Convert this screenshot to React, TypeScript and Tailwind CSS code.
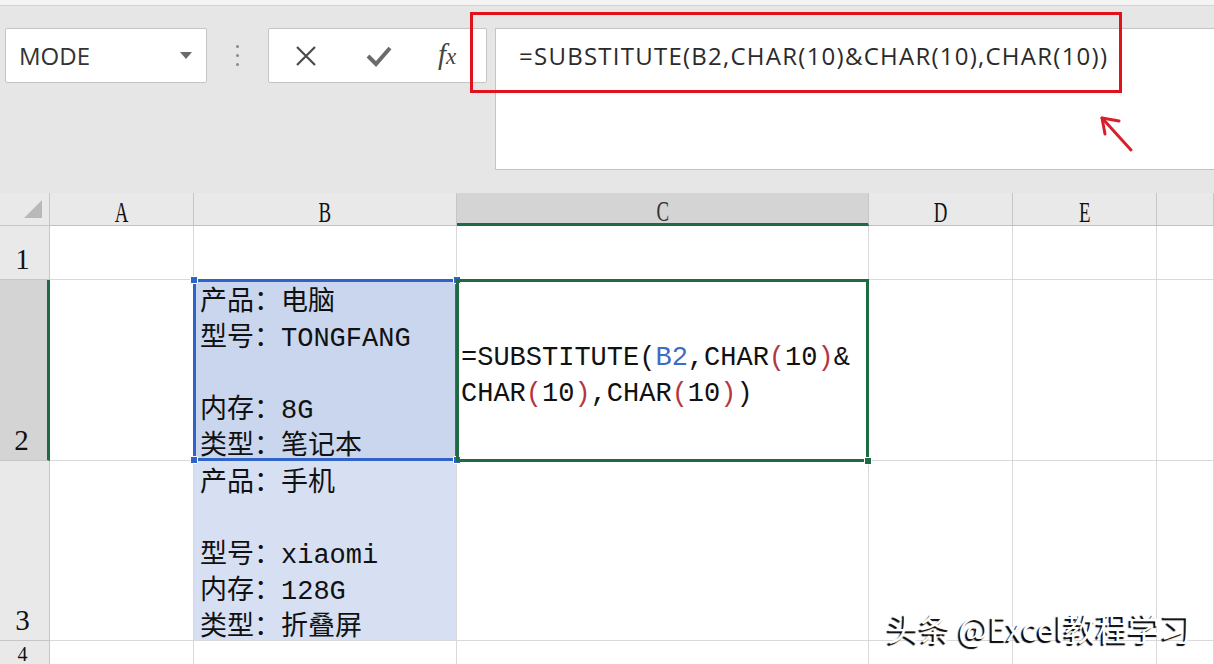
import React from 'react';

const cellFont = { fontFamily: '"Liberation Mono", "Noto Sans CJK SC", monospace' };
const headFont = { fontFamily: '"Liberation Serif", serif' };

// cell lines, empty string = blank line
const b2Lines = ['产品：电脑', '型号：TONGFANG', '', '内存：8G', '类型：笔记本'];
const b3Lines = ['产品：手机', '', '型号：xiaomi', '内存：128G', '类型：折叠屏'];

function Handle({ pos, color = 'bg-[#2f63c8]' }: { pos: string; color?: string }) {
  return <div className={`absolute w-[8px] h-[8px] rounded-[1px] border border-white ${color} ${pos}`} />;
}

function Paren({ c }: { c: string }) {
  return <span className="text-[#b4373f]">{c}</span>;
}

function Char10() {
  return (
    <>
      CHAR<Paren c="(" />10<Paren c=")" />
    </>
  );
}

function ColHead({ c }: { c: string }) {
  const active = c === 'C';
  return (
    <div
      className={`flex items-center justify-center pt-[6px] text-[29px] border-r border-[#c6c6c6] ${
        active ? 'bg-[#d4d4d4] border-b-[3px] border-b-[#1e6b43] text-[#333]' : 'bg-[#e9e9e9] border-b border-b-[#c0c0c0]'
      }`}
      style={headFont}
    >
      <span className="inline-block scale-x-[0.65] leading-none">{c}</span>
    </div>
  );
}

function RowHead({ n, active }: { n: string; active?: boolean }) {
  return (
    <div
      className={`flex items-end justify-center pr-[4px] text-[29px] leading-none pb-[5px] border-b border-b-[#c6c6c6] ${
        active ? 'bg-[#d4d4d4] border-r-[3px] border-r-[#1e6b43]' : 'bg-[#e9e9e9] border-r border-r-[#c6c6c6]'
      }`}
      style={headFont}
    >
      {n}
    </div>
  );
}

export default function App() {
  return (
    <div className="relative w-[1214px] h-[664px] overflow-hidden bg-white">
      {/* Formula bar area */}
      <div className="h-[193px] bg-[#e6e6e6] flex flex-col">
        <div className="h-[6px] bg-[#f4f4f4] border-b border-[#d2d2d2]" />
        <div className="flex items-start pl-[5px] pt-[22px]">
          {/* Name box */}
          <div className="w-[202px] h-[55px] bg-white border border-[#c4c4c4] rounded-[2px] flex items-center justify-between pl-[13px] pr-[14px]">
            <span className="text-[24px] text-[#333]" style={{ fontFamily: '"Open Sans", sans-serif' }}>MODE</span>
            <svg width="12" height="7" viewBox="0 0 12 7">
              <path d="M0 0 L12 0 L6 7 Z" fill="#6a6a6a" />
            </svg>
          </div>
          <div className="w-[61px] h-[55px] flex flex-col items-center justify-center gap-[6px]">
            <div className="w-[3px] h-[3px] rounded-full bg-[#8a8a8a]" />
            <div className="w-[3px] h-[3px] rounded-full bg-[#8a8a8a]" />
            <div className="w-[3px] h-[3px] rounded-full bg-[#8a8a8a]" />
          </div>
          {/* Cancel / enter / fx */}
          <div className="w-[219px] h-[55px] bg-white border border-[#c4c4c4] rounded-[2px] flex items-center pl-[26px]">
            <svg width="22" height="22" viewBox="0 0 22 22">
              <path d="M2 2 L20 20 M20 2 L2 20" stroke="#4a4a4a" strokeWidth="2.2" />
            </svg>
            <svg className="ml-[49px]" width="26" height="22" viewBox="0 0 26 22">
              <path d="M2 11 L10 19 L24 3" stroke="#6b6b6b" strokeWidth="4" fill="none" />
            </svg>
            <span
              className="ml-[46px] italic text-[29px] text-[#444] leading-none -mt-[2px]"
              style={{ fontFamily: '"Liberation Serif", serif' }}
            >
              f<span className="text-[23px]">x</span>
            </span>
          </div>
          {/* Formula input */}
          <div className="ml-[8px] flex-1 -mr-[10px] h-[142px] bg-white border border-[#c4c4c4] pl-[23px] pt-[9px]">
            <span
              className="text-[24px] text-[#2a2a2a] tracking-[1.25px]"
              style={{ fontFamily: '"Open Sans", sans-serif' }}
            >
              =SUBSTITUTE(B2,CHAR(10)&amp;CHAR(10),CHAR(10))
            </span>
          </div>
        </div>
      </div>

      {/* Sheet grid */}
      <div
        className="grid grid-cols-[50px_144px_263px_412px_144px_144px_1fr] grid-rows-[33px_54px_181px_180px_60px] text-[#111]"
        style={cellFont}
      >
        {/* header row */}
        <div className="bg-[#e9e9e9] border-r border-b border-[#c6c6c6] flex items-end justify-end pr-[7px] pb-[7px]">
          <svg width="18" height="18" viewBox="0 0 18 18">
            <path d="M18 0 L18 18 L0 18 Z" fill="#b9b9b9" />
          </svg>
        </div>
        {['A', 'B', 'C', 'D', 'E', ''].map((c) => (
          <ColHead key={c || 'F'} c={c} />
        ))}

        {/* row 1 */}
        <RowHead n="1" />
        {[0, 1, 2, 3, 4, 5].map((i) => (
          <div key={`r1-${i}`} className="border-r border-b border-[#d9d9d9]" />
        ))}

        {/* row 2 */}
        <RowHead n="2" active />
        <div className="border-r border-b border-[#d9d9d9]" />
        <div className="relative bg-[#c9d6ee] border-b border-[#d9d9d9]">
          <div className="pl-[6px] pt-[5px] text-[27px] leading-[36px]">
            {b2Lines.map((l, i) => (
              <div key={i} className="h-[36px] whitespace-pre">{l}</div>
            ))}
          </div>
          <div className="absolute -top-px -left-px -right-px -bottom-px border-[3px] border-[#2f63c8]" />
          <Handle pos="-top-[4px] -left-[4px]" />
          <Handle pos="-top-[4px] -right-[4px]" />
          <Handle pos="-bottom-[4px] -left-[4px]" />
          <Handle pos="-bottom-[4px] -right-[4px]" />
        </div>
        <div className="relative flex items-center pl-[4px] pt-[10px]">
          <div className="text-[27px] leading-[36px]">
            <div>
              =SUBSTITUTE(<span className="text-[#3d6cc0]">B2</span>,<Char10 />&amp;
            </div>
            <div>
              <Char10 />,<Char10 />)
            </div>
          </div>
          <div className="absolute -top-px -left-px right-0 -bottom-px border-[3px] border-[#1e6b43]" />
          <div className="absolute -bottom-[4px] -right-[3px] w-[8px] h-[8px] bg-[#1e6b43] border border-white" />
        </div>
        <div className="border-r border-b border-[#d9d9d9]" />
        <div className="border-r border-b border-[#d9d9d9]" />
        <div className="border-r border-b border-[#d9d9d9]" />

        {/* row 3 */}
        <RowHead n="3" />
        <div className="border-r border-b border-[#d9d9d9]" />
        <div className="bg-[#d7e0f2] border-r border-b border-[#d9d9d9]">
          <div className="pl-[6px] pt-[5px] text-[27px] leading-[36px]">
            {b3Lines.map((l, i) => (
              <div key={i} className="h-[36px] whitespace-pre">{l}</div>
            ))}
          </div>
        </div>
        <div className="border-r border-b border-[#d9d9d9]" />
        <div className="border-r border-b border-[#d9d9d9]" />
        <div className="border-r border-b border-[#d9d9d9]" />
        <div className="border-r border-b border-[#d9d9d9]" />

        {/* row 4 */}
        <div
          className="bg-[#e9e9e9] border-r border-[#c6c6c6] flex items-start justify-center pr-[4px] pt-[4px] text-[20px] leading-[18px]"
          style={headFont}
        >
          4
        </div>
        {[0, 1, 2, 3, 4, 5].map((i) => (
          <div key={`r4-${i}`} className="border-r border-[#d9d9d9]" />
        ))}
      </div>

      {/* Red annotation box and arrow */}
      <div className="absolute left-[470px] top-[12px] w-[652px] h-[81px] border-[3px] border-[#e0121c]" />
      <svg className="absolute left-[1095px] top-[112px]" width="44" height="44" viewBox="0 0 44 44">
        <path d="M7 6 L36 38" stroke="#d8202a" strokeWidth="3" strokeLinecap="round" />
        <path d="M7 6 L24 9 M7 6 L10 22" stroke="#d8202a" strokeWidth="3" strokeLinecap="round" />
      </svg>

      {/* Watermark */}
      <div
        className="absolute left-[887px] top-[603px] text-[32px] text-white [text-shadow:-2px_2px_1px_#000]"
        style={{ fontFamily: '"Noto Sans CJK SC", sans-serif' }}
      >
        头条 @Excel教程学习
      </div>
    </div>
  );
}
